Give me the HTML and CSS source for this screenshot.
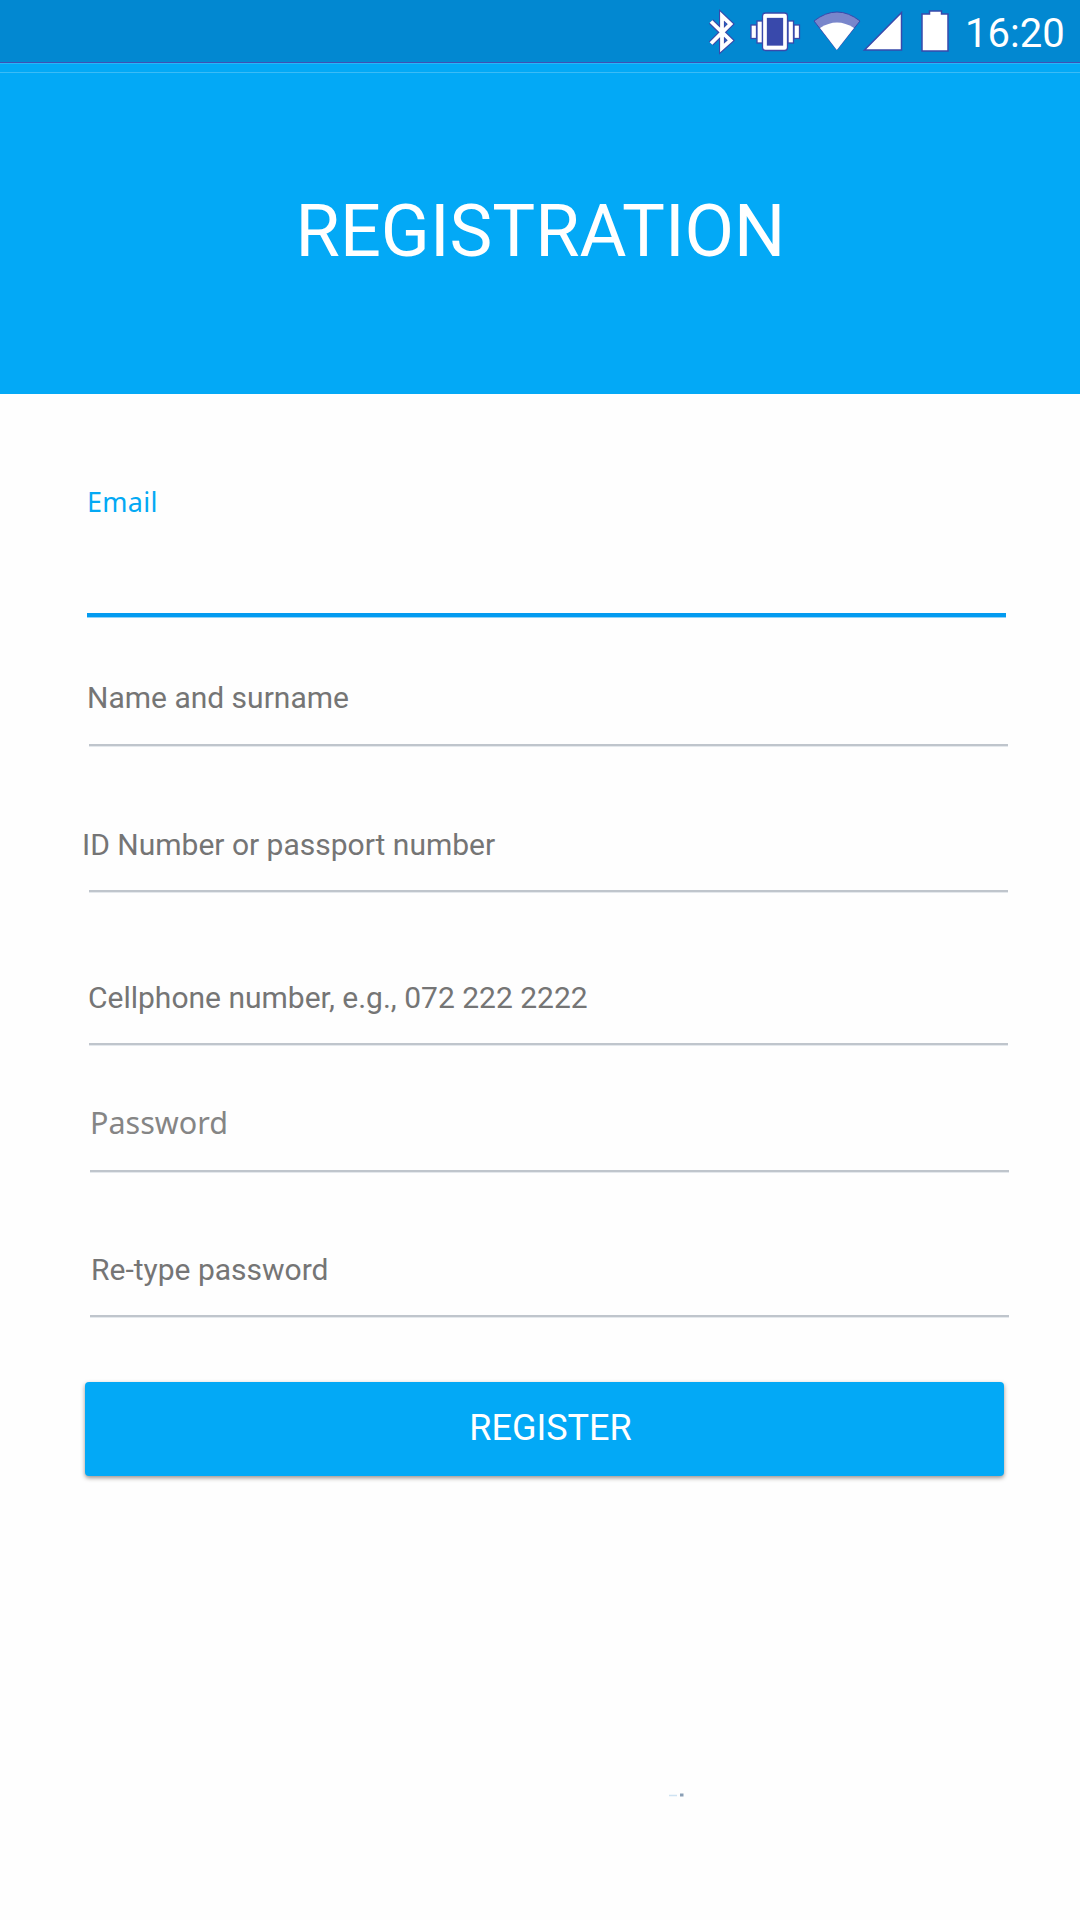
FILE: index.html
```html
<!DOCTYPE html>
<html lang="en">
<head>
<meta charset="utf-8">
<title>Registration</title>
<link rel="stylesheet" href="styles.css">
</head>
<body>
<div class="status-bar">
  <svg class="status-icons" width="270" height="62" viewBox="690 0 270 62" aria-hidden="true">
    <g fill="none" stroke-linejoin="miter">
      <path d="M711 21.5 L730.5 40.5 L722 48 V16 L730.5 24 L711 43.5" stroke="#3949ab" stroke-width="6"/>
      <path d="M711 21.5 L730.5 40.5 L722 48 V16 L730.5 24 L711 43.5" stroke="#fff" stroke-width="3.8"/>
    </g>
    <g fill="#fff" stroke="#3949ab" stroke-width="1.3">
      <rect x="751" y="25" width="5.500" height="13.500"/>
      <rect x="757" y="21" width="5.500" height="22"/>
      <rect x="794" y="25" width="5.500" height="13.500"/>
      <rect x="788" y="21" width="5.500" height="22"/>
      <rect x="762.500" y="13" width="25" height="37.500" rx="3"/>
      <rect x="767.500" y="18.500" width="15" height="26.500" fill="#3949ab"/>
    </g>
    <path d="M814 21 Q837 3 860 21 L836.800 50 Z" fill="#7986cb" stroke="#3949ab" stroke-width="1"/>
    <path d="M820 28 Q837 17 854 28 L836.800 50 Z" fill="#fff"/>
    <path d="M864.500 50 L901.500 12.500 V50 Z" fill="#fff" stroke="#3949ab" stroke-width="1.500"/>
    <path d="M922 14 H929.500 V11 H941.500 V14 H948 V51 H922 Z" fill="#fff" stroke="#3949ab" stroke-width="1.500"/>
  </svg>
  <span class="clock">16:20</span>
</div>
<header class="app-header"><h1 class="title">REGISTRATION</h1></header>
<form class="form">
  <label class="field field-email"><span class="label">Email</span></label>
  <label class="field field-name"><span class="label">Name and surname</span></label>
  <label class="field field-id"><span class="label">ID Number or passport number</span></label>
  <label class="field field-cell"><span class="label">Cellphone number, e.g., 072 222 2222</span></label>
  <label class="field field-password"><span class="label">Password</span></label>
  <label class="field field-retype"><span class="label">Re-type password</span></label>
  <button class="register" type="button">REGISTER</button>
</form>
<svg class="speck" width="20" height="6" viewBox="0 0 20 6" aria-hidden="true">
  <path d="M1 3.500 H9" stroke="#cfe3f2" stroke-width="1.500"/>
  <rect x="12" y="1.500" width="3.500" height="3" fill="#8a9fb5"/>
</svg>
</body>
</html>
```
FILE: styles.css
```css
* {
  box-sizing: border-box;
}

body {
  margin: 0;
  width: 1080px;
  height: 1920px;
  overflow: hidden;
  background: #fefefe;
  font-family: Roboto, sans-serif;
  color: #757575;
}

/* Status bar */
.status-bar {
  display: flex;
  justify-content: flex-end;
  height: 63px;
  padding-right: 13px;
  background: #0288d1;
  border-bottom: 1px solid #3f51b5;
}

.status-icons {
  flex: none;
  margin-right: 5px;
}

.clock {
  width: 102px;
  padding-top: 2px;
  font-size: 40px;
  line-height: 64px;
  color: #fff;
  white-space: nowrap;
}

/* Header */
.app-header {
  display: flex;
  justify-content: center;
  height: 331px;
  padding: 127px 0 0 1px;
  background: linear-gradient(#29b6f6 0 1px, #03a9f6 1px 9px, #3bbcf7 9px 10px, #03a9f6 10px);
}

.title {
  margin: 0;
  font-size: 72px;
  font-weight: 400;
  line-height: 84px;
  color: #fff;
}

/* Form */
.form {
  display: flex;
  flex-direction: column;
  padding-left: 87px;
}

.field {
  display: flex;
  flex-direction: column;
  justify-content: flex-end;
  width: 919px;
  padding-bottom: 27px;
  border-bottom: 2px solid #bfc5cc;
  box-shadow: 0 1px 0 #e4e8ec;
}

.label {
  font-size: 30px;
  line-height: 36px;
  white-space: nowrap;
}

.field-email {
  height: 223px;
  padding-bottom: 93px;
  border-bottom: 4px solid #039bf0;
  box-shadow: 0 1px 0 #8fd3fa;
  color: #03a9f4;
}

.field-email .label {
  font: 27px/36px "Noto Sans", sans-serif;
  letter-spacing: 0.3px;
}

.field-name {
  height: 129px;
  margin-left: 2px;
  padding-bottom: 28px;
}

.field-name .label {
  margin-left: -2px;
}

.field-id {
  height: 146px;
  margin-left: 2px;
}

.field-id .label {
  margin-left: -7px;
}

.field-cell {
  height: 153px;
  margin-left: 2px;
}

.field-cell .label {
  margin-left: -1px;
}

.field-password {
  height: 127px;
  margin-left: 3px;
  padding-bottom: 30px;
}

.field-password .label {
  font: 30.5px/36px "Noto Sans", sans-serif;
  color: #858585;
}

.field-retype {
  height: 145px;
  margin-left: 3px;
}

.field-retype .label {
  margin-left: 1px;
}

.register {
  width: 919px;
  height: 94px;
  margin: 65px 0 0 -2px;
  padding: 0 0 2px 12px;
  border: 0;
  border-radius: 4px;
  background: #03a9f6;
  box-shadow: 0 2px 4px rgba(60, 40, 30, 0.5);
  color: #fff;
  font: 36px/42px Roboto, sans-serif;
}

.speck {
  display: block;
  margin: 316px 0 0 668px;
}
```
